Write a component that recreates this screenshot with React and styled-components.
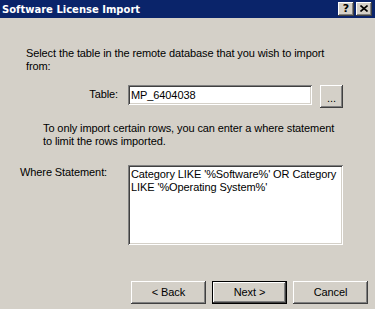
import React from "react";
import styled, { createGlobalStyle, css } from "styled-components";

const Global = createGlobalStyle`
  html, body { margin: 0; padding: 0; background: #D4D0C8; }
  body { font-family: "Liberation Sans", Arial, sans-serif; font-size: 11px; color: #000; letter-spacing: -0.1px; }
`;

const raised = css`
  box-shadow: inset -1px -1px #404040, inset 1px 1px #ffffff,
    inset -2px -2px #808080, inset 2px 2px #D4D0C8;
`;

const sunken = css`
  box-shadow: inset 1px 1px #808080, inset -1px -1px #ffffff,
    inset 2px 2px #404040, inset -2px -2px #D4D0C8;
`;

const Window = styled.div`
  width: 375px;
  height: 309px;
  background: #D4D0C8;
  display: flex;
  flex-direction: column;
  overflow: hidden;
`;

const TitleBar = styled.div`
  height: 18px;
  background: #0A246A;
  display: flex;
  align-items: center;
  justify-content: space-between;
  padding: 0 3px 0 2px;
  box-sizing: border-box;
`;

const Title = styled.span`
  color: #fff;
  font-family: "DejaVu Sans", Tahoma, sans-serif;
  font-weight: bold;
  font-size: 10px;
  letter-spacing: 0;
`;

const TitleButtons = styled.div`
  display: flex;
  gap: 2px;
`;

const TitleButton = styled.div`
  width: 16px;
  height: 14px;
  background: #D4D0C8;
  ${raised};
  display: flex;
  align-items: center;
  justify-content: center;
  font-family: "DejaVu Sans", sans-serif;
  font-weight: bold;
  font-size: 11px;
  line-height: 14px;
  padding-bottom: 1px;
  box-sizing: border-box;
`;

const Content = styled.div`
  display: flex;
  flex-direction: column;
  flex: 1;
  line-height: 13px;
`;

const Text = styled.p`
  margin: ${(p) => p.$top}px 0 0 ${(p) => p.$left}px;
  width: ${(p) => p.$width}px;
  line-height: 13px;
`;

const FieldRow = styled.div`
  display: grid;
  grid-template-columns: ${(p) => p.$labelStart}px ${(p) => 128 - p.$labelStart}px auto auto;
  justify-content: start;
  align-items: start;
  margin-top: ${(p) => p.$top}px;
`;

const Label = styled.label`
  grid-column: 2;
  text-align: ${(p) => (p.$right ? "right" : "left")};
  padding-right: 10px;
  margin-top: ${(p) => p.$pad || 0}px;
  white-space: nowrap;
`;

const Input = styled.div`
  width: 184px;
  height: 20px;
  background: #fff;
  ${sunken};
  box-sizing: border-box;
  padding: 3px 3px 0 3px;
  line-height: 14px;
  font-size: 11px;
`;

const SmallButton = styled.div`
  width: 23px;
  height: 23px;
  margin-left: 8px;
  background: #D4D0C8;
  ${raised};
  box-sizing: border-box;
  display: flex;
  align-items: center;
  justify-content: center;
  padding-top: 3px;
`;

const TextArea = styled.div`
  grid-column: 3 / span 2;
  width: 215px;
  height: 80px;
  background: #fff;
  ${sunken};
  box-sizing: border-box;
  padding: 3px 1px 0 3px;
  line-height: 13px;
`;

const ButtonBar = styled.div`
  margin-top: auto;
  display: flex;
  justify-content: flex-end;
  gap: 6px;
  padding: 0 7px 5px 0;
`;

const Button = styled.div`
  width: 75px;
  height: 23px;
  box-sizing: border-box;
  background: #D4D0C8;
  display: flex;
  align-items: center;
  justify-content: center;
  ${(p) =>
    p.$default
      ? css`
          border: 1px solid #000;
          box-shadow: inset -1px -1px #404040, inset 1px 1px #ffffff,
            inset -2px -2px #808080;
        `
      : raised};
`;

export default function App() {
  return (
    <Window>
      <Global />
      <TitleBar>
        <Title>Software License Import</Title>
        <TitleButtons>
          <TitleButton>?</TitleButton>
          <TitleButton>
            <svg width="8" height="7" viewBox="0 0 8 7">
              <path d="M0.5 0.5 L7.5 6.5 M7.5 0.5 L0.5 6.5" stroke="#000" strokeWidth="1.6" />
            </svg>
          </TitleButton>
        </TitleButtons>
      </TitleBar>
      <Content>
        <Text $top={29} $left={26} $width={320}>
          Select the table in the remote database that you wish to import from:
        </Text>
        <FieldRow $top={12} $labelStart={0}>
          <span />
          <Label $right $pad={3}>Table:</Label>
          <Input>MP_6404038</Input>
          <SmallButton>...</SmallButton>
        </FieldRow>
        <Text $top={14} $left={43} $width={300}>
          To only import certain rows, you can enter a where statement to limit the rows imported.
        </Text>
        <FieldRow $top={17} $labelStart={20}>
          <span />
          <Label $pad={1}>Where Statement:</Label>
          <TextArea>
            Category LIKE '%Software%' OR Category LIKE '%Operating System%'
          </TextArea>
        </FieldRow>
        <ButtonBar>
          <Button>&lt; Back</Button>
          <Button $default>Next &gt;</Button>
          <Button>Cancel</Button>
        </ButtonBar>
      </Content>
    </Window>
  );
}
